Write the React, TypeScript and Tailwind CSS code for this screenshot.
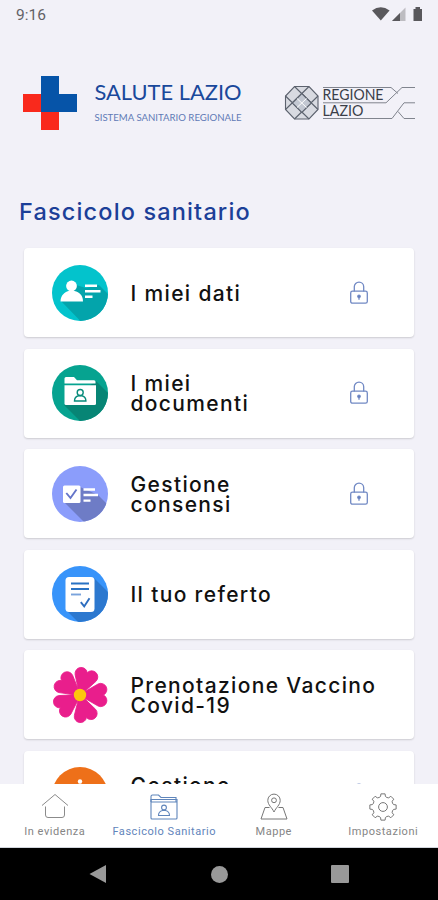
import React from 'react';

interface MenuEntry {
  id: string;
  title: string;
  icon: React.ReactNode;
  locked: boolean;
}

const DatiIcon = () => (
  <svg viewBox="0 0 56 56" className="w-14 h-14">
    <clipPath id="clip-dati"><circle cx="28" cy="28" r="28" /></clipPath>
    <circle cx="28" cy="28" r="28" fill="#03c3cc" />
    <path d="M9 36 24 20 34 23 47 20 70 43V70H42Z" fill="#03a4ab" clipPath="url(#clip-dati)" />
    <circle cx="19.5" cy="21" r="5.4" fill="#fff" />
    <path d="M8.500 36.500c0-6 4-9.500 8-10.500h6c5 1 8.500 4.500 8.500 10.500Z" fill="#fff" />
    <path d="M33 20.800h12M33 26.300h15.500M33 31.800h7.500" stroke="#fff" strokeWidth="2.600" />
  </svg>
);

const DocumentiIcon = () => (
  <svg viewBox="0 0 56 56" className="w-14 h-14">
    <clipPath id="clip-doc"><circle cx="28" cy="28" r="28" /></clipPath>
    <circle cx="28" cy="28" r="28" fill="#06a390" />
    <path d="M12 40 44 16 75 47V72H44Z" fill="#078575" clipPath="url(#clip-doc)" />
    <path d="M12.500 18.500V13.500q0-1.500 1.500-1.500h8l3 3.200h17q1.500 0 1.500 1.500v1.800Z" fill="#fff" />
    <path d="M12.500 20.300h31.500v18.200q0 1.500-1.500 1.500H14q-1.500 0-1.500-1.500Z" fill="#fff" />
    <circle cx="28.200" cy="27.500" r="3" fill="none" stroke="#078b7b" strokeWidth="1.400" />
    <path d="M22.500 36c0-3.500 2-4.800 4.200-5.200h3c2.300.4 4.200 1.700 4.200 5.200Z" fill="none" stroke="#078b7b" strokeWidth="1.400" />
  </svg>
);

const ConsensiIcon = () => (
  <svg viewBox="0 0 56 56" className="w-14 h-14">
    <clipPath id="clip-cons"><circle cx="28" cy="28" r="28" /></clipPath>
    <circle cx="28" cy="28" r="28" fill="#8b9dfb" />
    <path d="M12 36 28 21 46 29 70 53V70H46Z" fill="#6e7cc6" clipPath="url(#clip-cons)" />
    <rect x="11" y="19.500" width="17.500" height="17.500" rx="1.500" fill="#fff" />
    <path d="m14.300 27 4.200 5 6-8.500" fill="none" stroke="#6474c9" strokeWidth="1.900" />
    <path d="M31.500 23.500h11.500M31.500 29h14.500M31.500 34.700h7" stroke="#fff" strokeWidth="2.300" />
  </svg>
);

const RefertoIcon = () => (
  <svg viewBox="0 0 56 56" className="w-14 h-14">
    <clipPath id="clip-ref"><circle cx="28" cy="28" r="28" /></clipPath>
    <circle cx="28" cy="28" r="28" fill="#3894fa" />
    <path d="M14 44 42 12 72 42V72H42Z" fill="#2c78cf" clipPath="url(#clip-ref)" />
    <rect x="13.500" y="11" width="29" height="35" rx="3.500" fill="#fff" />
    <path d="M19 17.500h18M19 23h18" stroke="#2872c4" strokeWidth="2" />
    <path d="M19 28.500h10" stroke="#7aa3dc" strokeWidth="1.900" />
    <path d="m28.800 36.200 3.400 4.200 5.300-8.200" fill="none" stroke="#2c6dbf" strokeWidth="1.900" />
  </svg>
);

// one heart petal, tip at the origin
const PETAL = 'M-3.200-4.500L-11-18A5.800 5.800 0 0 1 0-23.500A5.800 5.800 0 0 1 11-18L3.200-4.500Z';

const VaccinoIcon = () => (
  <svg viewBox="-28 -28 56 56" className="w-14 h-14 overflow-visible">
    {[18, 90, 164, 237, 308].map((angle) => (
      <path key={angle} d={PETAL} transform={`rotate(${angle})`} fill="#e91e8c" stroke="#e91e8c" strokeWidth="0.800" strokeLinejoin="round" />
    ))}
    <circle r="6.200" fill="#fdc70c" />
  </svg>
);

const GestioneIcon = () => (
  <svg viewBox="0 0 56 56" className="w-14 h-14">
    <circle cx="28" cy="28" r="28" fill="#ee7019" />
    <circle cx="28" cy="14.500" r="2.200" fill="#fff" />
    <path d="M22 18.500q6-3.500 12 0h4v24H18v-24Z" fill="#fff" />
  </svg>
);

const LockIcon = () => (
  <svg viewBox="0 0 18 24" className="w-[18px] h-6 shrink-0" fill="none" stroke="#7189c4" strokeWidth="1.300">
    <path d="M4.300 10.500V5.800a4.700 4.700 0 0 1 9.400 0v4.700" />
    <rect x="0.700" y="10.200" width="16.600" height="12" rx="1.800" />
    <circle cx="9" cy="15.300" r="1.200" fill="#5574b6" />
    <path d="M9 16v2.800" />
  </svg>
);

const entries: MenuEntry[] = [
  { id: 'dati', title: 'I miei dati', icon: <DatiIcon />, locked: true },
  { id: 'documenti', title: 'I miei\ndocumenti', icon: <DocumentiIcon />, locked: true },
  { id: 'consensi', title: 'Gestione\nconsensi', icon: <ConsensiIcon />, locked: true },
  { id: 'referto', title: 'Il tuo referto', icon: <RefertoIcon />, locked: false },
  { id: 'vaccino', title: 'Prenotazione Vaccino\nCovid-19', icon: <VaccinoIcon />, locked: false },
  { id: 'gestione', title: 'Gestione\n\u00a0', icon: <GestioneIcon />, locked: true },
];

const StatusBar = () => (
  <div className="h-[30px] shrink-0 flex items-center justify-between pl-4 pr-[14px]">
    <span className="font-['Roboto'] text-[15.500px] leading-none text-[#626166] pt-px">9:16</span>
    <svg viewBox="0 0 52 16" className="w-[52px] h-4 mb-[3px]">
      <path d="M0 4.500Q8.800-1.800 17.600 4.500L8.800 14.500Z" fill="#59585c" />
      <path d="M20 15 33.500 1.500V15Z" fill="#bdbcc1" />
      <path d="M20 15 28 7V15Z" fill="#59585c" />
      <path d="M41.500 3h2V1h4.500v2h2v12h-8.500Z" fill="#59585c" />
    </svg>
  </div>
);

const Header = () => (
  <header className="h-[146px] shrink-0 flex items-center pl-[23px] pr-[22px]">
    <svg viewBox="0 0 54 54" className="w-[54px] h-[54px]">
      <path d="M0 18H18V36H0ZM18 36H36V54H18Z" fill="#f9291c" />
      <path d="M18 0H36V18H54V36H18Z" fill="#0654a8" />
    </svg>
    <svg viewBox="0 0 150 46" className="w-[150px] h-[46px] ml-4" fontFamily="Lato, sans-serif">
      <text x="1.500" y="20" fontSize="21.500" textLength="147" lengthAdjust="spacingAndGlyphs" fill="#19489b">SALUTE LAZIO</text>
      <text x="1.500" y="41.200" fontSize="8.800" textLength="147" lengthAdjust="spacingAndGlyphs" fill="#5f7ab6">SISTEMA SANITARIO REGIONALE</text>
    </svg>
    <svg viewBox="0 0 132 36" className="w-[132px] h-9 ml-auto" fill="none" fontFamily="Lato, sans-serif">
      <g stroke="#5c626e" strokeWidth="1.100">
        <path d="M10.500 1.500H25L34 11V24.500L25 34H10.500L1.500 24.500V11Z" fill="#d8dae1" />
        <path d="M10.500 1.500 34 24.500M25 1.500 1.500 24.500M1.500 11 25 34M34 11 10.500 34" />
        <path d="M17.800 8.500 27.300 18 17.800 27.500 8.300 18Z" fill="#c3c8d2" />
        <path d="M13 13.500 22.500 22.500M22.500 13.500 13 22.500" stroke="#fff" strokeWidth="1" />
      </g>
      <path d="M39 2.500H107L114 8.500M39 17.800H102L118 2.500H131M39 33.500H108L120 17.800H131M114 26.500 120 33.500H131" stroke="#80848e" strokeWidth="1" />
      <text x="38.500" y="15.300" fontSize="14.500" textLength="61" lengthAdjust="spacingAndGlyphs" fill="#3a3e49">REGIONE</text>
      <text x="38.500" y="31" fontSize="14.500" textLength="41" lengthAdjust="spacingAndGlyphs" fill="#3a3e49">LAZIO</text>
    </svg>
  </header>
);

const MenuCard = ({ entry }: { entry: MenuEntry }) => (
  <button className="h-[89px] shrink-0 w-full flex items-center text-left bg-white rounded-[4px] pl-7 pr-[46px] shadow-[0_1px_2px_rgba(0,0,0,0.16)]">
    {entry.icon}
    <span className="flex-grow ml-[22.500px] pt-0.5 text-[21px] leading-[20px] tracking-[1.350px] font-medium text-[#111] whitespace-pre">{entry.title}</span>
    {entry.locked && <LockIcon />}
  </button>
);

const HomeTabIcon = () => (
  <svg viewBox="0 0 28 28" className="w-7 h-7" fill="none" stroke="#8b8b8b" strokeWidth="1">
    <path d="M1 12.500 14 1.500 27 12.500M4.500 13.500V22q0 2.500 2.500 2.500H21q2.500 0 2.500-2.500V13.500" />
  </svg>
);

const FolderTabIcon = () => (
  <svg viewBox="0 0 28 28" className="w-7 h-7" fill="none" stroke="#5f85bb" strokeWidth="1.100">
    <path d="M1 9V3.500Q1 2 2.500 2H8.500L11 4.500H26V9" />
    <path d="M1 6.500H27V25q0 1-1 1H2q-1 0-1-1ZM1 9H27" />
    <circle cx="14" cy="14.500" r="2.400" />
    <path d="M8.500 22.500c0-3 2-4.500 4-5h3c2 .5 4 2 4 5Z" />
  </svg>
);

const MapTabIcon = () => (
  <svg viewBox="0 0 28 28" className="w-7 h-7" fill="none" stroke="#777" strokeWidth="1">
    <path d="M14 19C12 14.500 7.800 12 7.800 7.300a6.200 6.200 0 0 1 12.400 0C20.200 12 16 14.500 14 19Z" />
    <circle cx="14" cy="7.300" r="2.400" />
    <path d="M9.500 14.500H5L1 26H27L23 14.500H18.500" />
  </svg>
);

const polar = (radius: number, deg: number) => {
  const rad = (deg * Math.PI) / 180;
  return `${(radius * Math.sin(rad)).toFixed(2)} ${(-radius * Math.cos(rad)).toFixed(2)}`;
};

// eight teeth, joined by shallow concave notches
const GEAR = [0, 45, 90, 135, 180, 225, 270, 315]
  .map((a, i) => `${i === 0 ? 'M' : 'L'}${polar(10.8, a - 13)}L${polar(13.3, a - 9)}L${polar(13.3, a + 9)}L${polar(10.8, a + 13)}A4.2 4.2 0 0 0 ${polar(10.8, a + 32)}`)
  .join('') + 'Z';

const GearTabIcon = () => (
  <svg viewBox="-14 -14 28 28" className="w-7 h-7" fill="none" stroke="#777" strokeWidth="1" strokeLinejoin="round">
    <path d={GEAR} />
    <circle r="4.400" />
  </svg>
);

const TabBar = () => (
  <nav className="relative z-10 h-16 shrink-0 grid grid-cols-4 bg-white border-b border-gray-300 pt-[9px] font-['Roboto'] text-[11px] leading-[13px] tracking-[0.550px] text-[#858585] whitespace-nowrap">
    <div className="flex flex-col items-center gap-1"><HomeTabIcon /><span>In evidenza</span></div>
    <div className="flex flex-col items-center gap-1 text-[#6184bb]"><FolderTabIcon /><span>Fascicolo Sanitario</span></div>
    <div className="flex flex-col items-center gap-1"><MapTabIcon /><span>Mappe</span></div>
    <div className="flex flex-col items-center gap-1"><GearTabIcon /><span>Impostazioni</span></div>
  </nav>
);

const SystemBar = () => (
  <div className="h-[52px] shrink-0 bg-black flex items-center justify-between pl-[89px] pr-[89px]">
    <svg viewBox="0 0 18 20" className="w-[18px] h-5"><path d="M0.500 10 17 1V19Z" fill="#999" /></svg>
    <div className="w-[17px] h-[17px] rounded-full bg-[#999]" />
    <div className="w-[18px] h-[18px] rounded-[1px] bg-[#999]" />
  </div>
);

const App: React.FC = () => {
  return (
    <div className="w-full h-screen flex flex-col overflow-hidden bg-[#f2f1f8] font-['Inter',sans-serif]">
      <StatusBar />
      <Header />
      <main className="flex-1 min-h-0 overflow-hidden flex flex-col">
        <h1 className="h-[72px] shrink-0 pl-[19px] pt-[22px] text-[23.500px] leading-[28px] tracking-[1.150px] font-medium text-[#1c3f98]">Fascicolo sanitario</h1>
        <div className="flex flex-col gap-[11.600px] pl-6 pr-6">
          {entries.map((entry) => (
            <MenuCard key={entry.id} entry={entry} />
          ))}
        </div>
      </main>
      <TabBar />
      <SystemBar />
    </div>
  );
};

export default App;
